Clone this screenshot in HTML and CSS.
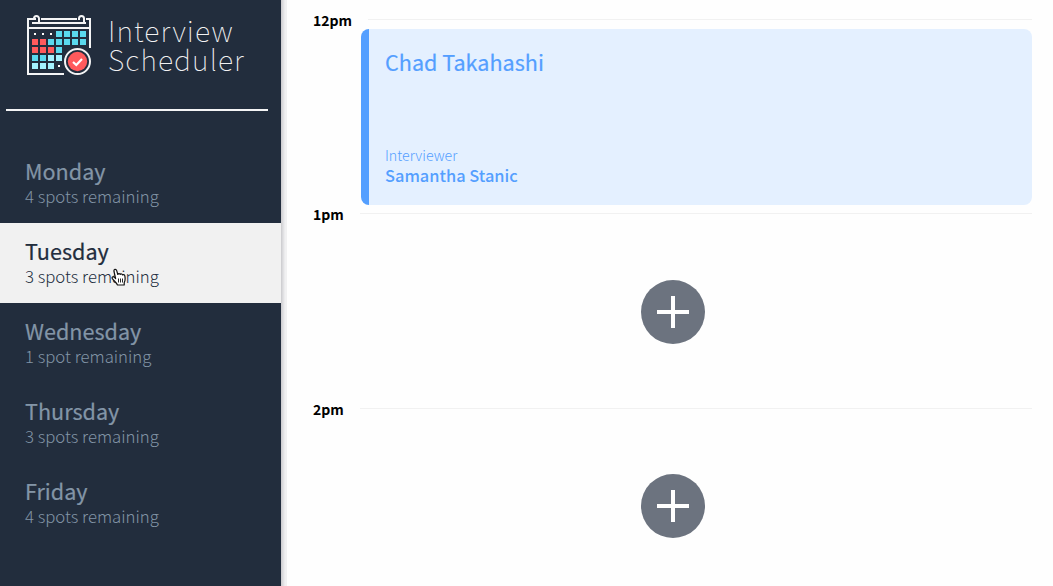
FILE: index.html
```html
<!DOCTYPE html>
<html lang="en">
<head>
<meta charset="utf-8">
<title>Interview Scheduler</title>
<link rel="stylesheet" href="styles.css">
</head>
<body>
<div class="layout">
  <aside class="sidebar">
    <header class="brand">
      <svg class="logo" width="66" height="62" viewBox="0 0 66 62" fill="none">
        <g stroke="#f4f4f5" stroke-width="2">
          <path d="M10 5H2V60H38M15 5H51M60 5H64V34M2 14H64M6 9H13M13 9V4.500A2.500 2.500 0 0 0 8 4.500M13 9H60M58 9V4.500A2.500 2.500 0 0 0 53 4.500V6M8 4V6"/>
        </g>
        <path fill="#fff" d="M8 19h2v2h-2zM16 19h2v2h-2zM24 19h2v2h-2zM32 51h2v2h-2z"/>
        <path fill="#5ad9ee" d="M30 17h6v6h-6zM38 17h6v6h-6zM46 17h6v6h-6zM54 17h6v6h-6zM22 25h6v6h-6zM30 25h6v6h-6zM38 25h6v6h-6zM46 25h6v6h-6zM54 25h6v6h-6zM30 33h6v6h-6zM6 41h6v6h-6zM14 41h6v6h-6z"/>
        <path fill="#ff5a5c" d="M6 25h6v6h-6zM14 25h6v6h-6zM6 33h6v6h-6zM14 33h6v6h-6zM22 33h6v6h-6z"/>
        <path fill="#a4f2ff" d="M22 41h6v6h-6zM30 41h6v6h-6zM6 49h6v6h-6zM14 49h6v6h-6zM22 49h6v6h-6z"/>
        <circle cx="51.500" cy="47.500" r="12.500" fill="#222d3d" stroke="#f4f4f5" stroke-width="2"/>
        <circle cx="51.500" cy="47.500" r="9.700" fill="#ff5a5c"/>
        <path d="M47 48L50.300 51L56 45" stroke="#fff" stroke-width="2.200"/>
      </svg>
      <h1 class="brand-name"><span>Interview</span><span>Scheduler</span></h1>
    </header>
    <hr class="divider">
    <ul class="days">
      <li class="day"><h2>Monday</h2><p>4 spots remaining</p></li>
      <li class="day selected"><h2>Tuesday</h2><p>3 spots remaining</p></li>
      <li class="day"><h2>Wednesday</h2><p>1 spot remaining</p></li>
      <li class="day"><h2>Thursday</h2><p>3 spots remaining</p></li>
      <li class="day"><h2>Friday</h2><p>4 spots remaining</p></li>
    </ul>
  </aside>
  <main class="schedule">
    <section class="slot">
      <header class="hour first"><h4>12pm</h4><hr></header>
      <article class="card">
        <h2>Chad Takahashi</h2>
        <div><h4>Interviewer</h4><h3>Samantha Stanic</h3></div>
      </article>
    </section>
    <section class="slot">
      <header class="hour"><h4>1pm</h4><hr></header>
      <div class="empty lower"><button class="add" aria-label="Add"><svg width="64" height="64"><path d="M32 16V48M16 32H48" stroke="#fff" stroke-width="4"/></svg></button></div>
    </section>
    <section class="slot">
      <header class="hour"><h4>2pm</h4><hr></header>
      <div class="empty"><button class="add" aria-label="Add"><svg width="64" height="64"><path d="M32 16V48M16 32H48" stroke="#fff" stroke-width="4"/></svg></button></div>
    </section>
  </main>
</div>
<svg class="cursor" width="16" height="19" viewBox="0 0 16 19">
  <path d="M4.600 10.500L3 3.500C2.500 1 5.100.500 5.700 2.700L6.800 6.500C7.300 5.100 9 5.500 9.200 6.500C9.900 5.500 11.300 5.900 11.600 7C12.700 6.200 13.700 7 13.900 8.200C14.300 11 14.600 12.500 13.200 14.500V17H6.500C5.500 14.500 3.300 13.200 1.500 10.800C.400 9.200 2 8 3.300 9.200Z" fill="#fff" stroke="#111" stroke-width="1.200" stroke-linejoin="round"/>
  <path d="M7.500 10.500V14.500M9.500 10.500V14.500M11.500 10.500V14.500" stroke="#111" stroke-width=".9"/>
</svg>
</body>
</html>
```
FILE: styles.css
```css
* { box-sizing: border-box; margin: 0; padding: 0; }
body {
  width: 1053px;
  height: 586px;
  overflow: hidden;
  background: #fefefe;
  font-family: "Noto Sans CJK SC", "Noto Sans", sans-serif;
}
.layout { display: flex; height: 586px; }
.sidebar {
  position: relative;
  width: 281px;
  flex: none;
  background: #222d3d;
  box-shadow: 1px 0 0 #cfcfd2, 2px 0 0 #d9d9dc, 3px 0 0 #e2e2e4, 4px 0 0 #ebebed, 6px 0 0 #f1f1f2;
}
.brand { display: flex; gap: 16px; height: 109px; padding: 14px 0 0 26px; }
.logo { flex: none; }
.brand-name {
  display: flex;
  flex-direction: column;
  color: #f2f2f3;
  font-size: 28.500px;
  font-weight: 100;
  line-height: 29px;
  letter-spacing: 1.100px;
  padding-top: 1px;
}
.divider { width: 262px; height: 2px; margin-left: 6px; border: 0; background: #f4f4f5; }
.days { list-style: none; padding-top: 32px; }
.day { height: 80px; padding: 15px 25px 0; color: #8395a7; }
.day h2 { font-size: 21.600px; font-weight: 400; line-height: 26px; -webkit-text-stroke: .2px currentColor; }
.day p { font-size: 16.750px; font-weight: 300; line-height: 24px; }
.day.selected { background: #f1f1f1; color: #222d3d; }
.schedule { flex: 1; padding: 11px 21px 0 32px; }
.hour { display: flex; height: 18px; }
.hour h4 { width: 47px; font-size: 14px; font-weight: 700; line-height: 18px; color: #000; }
.hour hr { flex: 1; height: 1px; margin-top: 8px; border: 0; background: #f1f1f1; }
.hour.first h4 { width: 55px; }
.card {
  display: flex;
  flex-direction: column;
  justify-content: space-between;
  height: 176px;
  margin-left: 48px;
  padding: 17px 16px 20px;
  border-left: 8px solid #549fff;
  border-radius: 8px;
  background: #e4f0ff;
  color: #549fff;
}
.card h2 { font-size: 21.600px; font-weight: 400; line-height: 32px; -webkit-text-stroke: .2px currentColor; }
.card h4 { font-size: 14.200px; font-weight: 300; line-height: 20px; }
.card h3 { font-size: 16.400px; font-weight: 500; line-height: 20px; }
.empty { display: flex; justify-content: center; height: 177px; margin-left: 48px; padding: 56px 48px 0 0; }
.lower { padding-top: 57px; }
.add { width: 64px; height: 64px; border: 0; border-radius: 50%; background: #6c737f; }
.add svg { display: block; }
.cursor { position: absolute; left: 111px; top: 268px; }
```
